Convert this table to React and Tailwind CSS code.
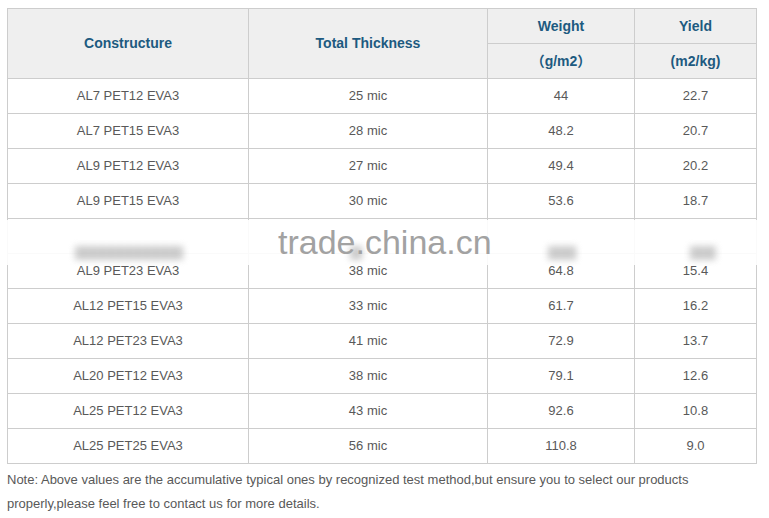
import React from "react";

const rows = [
  ["AL7 PET12 EVA3", "25 mic", "44", "22.7"],
  ["AL7 PET15 EVA3", "28 mic", "48.2", "20.7"],
  ["AL9 PET12 EVA3", "27 mic", "49.4", "20.2"],
  ["AL9 PET15 EVA3", "30 mic", "53.6", "18.7"],
  null,
  ["AL9 PET23 EVA3", "38 mic", "64.8", "15.4"],
  ["AL12 PET15 EVA3", "33 mic", "61.7", "16.2"],
  ["AL12 PET23 EVA3", "41 mic", "72.9", "13.7"],
  ["AL20 PET12 EVA3", "38 mic", "79.1", "12.6"],
  ["AL25 PET12 EVA3", "43 mic", "92.6", "10.8"],
  ["AL25 PET25 EVA3", "56 mic", "110.8", "9.0"],
];

const font = { fontFamily: '"Liberation Sans", Arial, "Noto Sans CJK SC", sans-serif' };
const cjk = { fontFamily: '"Noto Sans CJK SC", "Liberation Sans", sans-serif' };

const th = "border border-[#cdcdcd] font-bold";
const streak = "h-[14px] blur-[3px] bg-[repeating-linear-gradient(90deg,#a8a8a8_0px,#c8c8c8_5px,#a0a0a0_9px)] opacity-70";

export default function App() {
  return (
    <div className="w-[769px] h-[518px] bg-white pt-[8px] pl-[7px]" style={font}>
      <div className="relative w-[749px]">
        <table className="w-[749px] border-collapse table-fixed">
          <colgroup>
            <col className="w-[241px]" />
            <col className="w-[239px]" />
            <col className="w-[147px]" />
            <col className="w-[122px]" />
          </colgroup>
          <thead className="bg-[#efefef] text-[#1d5a80] text-[14px]">
            <tr className="h-[35px]">
              <th rowSpan={2} className={th}>Constructure</th>
              <th rowSpan={2} className={th}>Total Thickness</th>
              <th className={th}>Weight</th>
              <th className={th}>Yield</th>
            </tr>
            <tr className="h-[35px]">
              <th className={th}><span style={cjk}>（</span>g/m2<span style={cjk}>）</span></th>
              <th className={th}>(m2/kg)</th>
            </tr>
          </thead>
          <tbody className="text-[13px] text-[#595959]">
            {rows.map((r, i) => (
              <tr key={i} className="h-[35px]">
                {(r || ["", "", "", ""]).map((c, j) => (
                  <td key={j} className="border border-[#cdcdcd] text-center">{c}</td>
                ))}
              </tr>
            ))}
          </tbody>
        </table>

        {/* trade.china.cn watermark lying over the fifth row */}
        <div className="absolute left-[-7px] top-[212px] w-[769px] h-[45px] bg-white/90 pointer-events-none">
          <div className="flex items-end h-[40px]">
            <div className={`ml-[75px] w-[108px] ${streak}`} />
            <div className={`ml-[167px] w-[12px] ${streak}`} />
            <div className={`ml-[186px] w-[28px] ${streak}`} />
            <div className={`ml-[114px] w-[26px] ${streak}`} />
          </div>
        </div>
        <div className="absolute left-[271px] top-[214px] text-[34px] leading-[40px] text-[#a2a2a2] pointer-events-none">
          trade.china.cn
        </div>
      </div>

      <p className="mt-[4px] text-[13px] leading-[24px] text-[#595959] w-[740px]">
        Note: Above values are the accumulative typical ones by recognized test method,but ensure you to select our products
        properly,please feel free to contact us for more details.
      </p>
    </div>
  );
}
